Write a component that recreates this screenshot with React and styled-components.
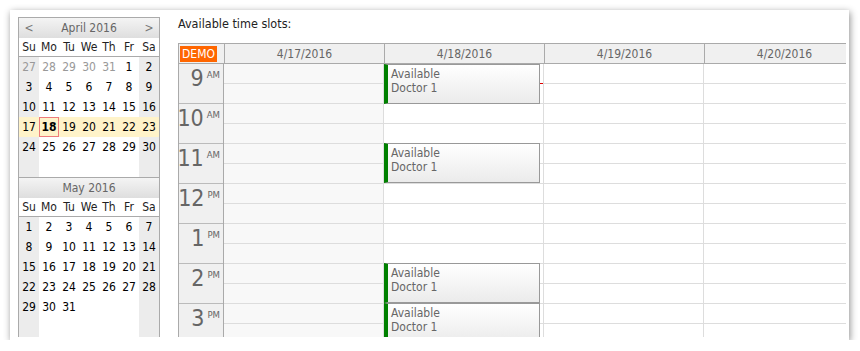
import React from "react";
import styled, { createGlobalStyle } from "styled-components";

const GlobalStyle = createGlobalStyle`
  body {
    margin: 0;
    background: #fff;
    font-family: "DejaVu Sans Condensed", "DejaVu Sans", sans-serif;
    font-size: 12px;
  }
`;

const Card = styled.div`
  margin: 10px 0 0 10px;
  width: 839px;
  height: 330px;
  box-sizing: border-box;
  background: #fff;
  box-shadow: 1px 2px 7px rgba(0, 0, 0, 0.45);
  padding: 7px 0 0 8px;
`;

const Body = styled.div`
  display: flex;
  align-items: flex-start;
  gap: 18px;
  height: 320px;
  overflow: hidden;
`;

const Nav = styled.div`
  width: 142px;
  box-sizing: border-box;
  border: 1px solid #aaa;
  display: flex;
  flex-direction: column;
  flex-shrink: 0;
`;

const Month = styled.div`
  & + & {
    border-top: 1px solid #aaa;
  }
`;

const MonthHeader = styled.div`
  height: 20px;
  display: flex;
  align-items: center;
  justify-content: space-between;
  padding: 0 5px;
  background: linear-gradient(#f4f4f4, #dedede);
  color: #666;
`;

const Arrow = styled.span`
  width: 10px;
  text-align: center;
  color: #777;
`;

const DayNames = styled.div`
  display: grid;
  grid-template-columns: repeat(7, 20px);
  height: 18px;
  align-items: center;
  border-bottom: 1px solid #aaa;
  background: #fff;
`;

const DayName = styled.span`
  text-align: center;
  color: #222;
`;

const Days = styled.div`
  display: grid;
  grid-template-columns: repeat(7, 20px);
  grid-auto-rows: 20px;
`;

const Day = styled.div`
  box-sizing: border-box;
  display: flex;
  align-items: center;
  justify-content: center;
  color: ${({ $other }) => ($other ? "#999" : "#000")};
  font-weight: ${({ $today }) => ($today ? "bold" : "normal")};
  border: ${({ $today }) => ($today ? "1px solid #ee7c7c" : "none")};
  background: ${({ $selected, $weekend }) =>
    $selected ? "#fff3c9" : $weekend ? "#ececec" : "#fff"};
`;

const Main = styled.div`
  display: flex;
  flex-direction: column;
`;

const Title = styled.div`
  height: 14px;
  line-height: 14px;
  margin-bottom: 12px;
  color: #222;
  font-size: 12.5px;
`;

const Scheduler = styled.div`
  width: 668px;
  overflow: hidden;
  border-left: 1px solid #aaa;
  border-top: 1px solid #aaa;
  box-sizing: border-box;
`;

const HeaderRow = styled.div`
  display: flex;
  height: 19px;
  border-bottom: 1px solid #aaa;
  background: #f0f0f0;
`;

const Corner = styled.div`
  width: 44px;
  flex-shrink: 0;
  border-right: 1px solid #aaa;
  display: flex;
  align-items: center;
  padding-left: 1px;
`;

const Demo = styled.span`
  background: #ff6600;
  color: #fff;
  padding: 1px 2px;
  line-height: 14px;
`;

const ColHeader = styled.div`
  width: 159px;
  flex-shrink: 0;
  border-right: 1px solid #aaa;
  display: flex;
  align-items: center;
  justify-content: center;
  color: #666;
`;

const Grid = styled.div`
  display: flex;
`;

const RowHeaders = styled.div`
  width: 44px;
  flex-shrink: 0;
  border-right: 1px solid #aaa;
  background: #f0f0f0;
`;

const HourCell = styled.div`
  height: 39px;
  border-bottom: 1px solid #bbb;
  display: flex;
  justify-content: flex-end;
  align-items: flex-start;
  padding-right: 3px;
  color: #666;
`;

const HourNum = styled.span`
  font-size: 23px;
  line-height: 26px;
  margin-top: 1px;
`;

const Ampm = styled.span`
  font-size: 9.5px;
  margin: 5px 0 0 3px;
`;

const DayCol = styled.div`
  position: relative;
  width: 159px;
  flex-shrink: 0;
  border-right: 1px solid #ddd;
  background: ${({ $off }) => ($off ? "#f8f8f8" : "#fff")};
`;

const Slot = styled.div`
  height: 19px;
  border-bottom: 1px solid #ddd;
`;

const Event = styled.div`
  position: absolute;
  left: 0;
  width: 156px;
  height: 40px;
  top: ${({ $row }) => Math.max(0, $row * 40 - 1)}px;
  box-sizing: border-box;
  border: 1px solid #999;
  border-left: 4px solid #008000;
  background: linear-gradient(#fff, #ebebeb);
  color: #666;
  padding: 2px 0 0 3px;
  line-height: 14px;
  z-index: 1;
`;

const RedMark = styled.div`
  position: absolute;
  right: 0;
  top: 19px;
  width: 4px;
  height: 1px;
  background: #d00;
`;

const april = {
  name: "April 2016",
  arrows: true,
  days: [
    [27, 1], [28, 1], [29, 1], [30, 1], [31, 1], [1], [2],
    [3], [4], [5], [6], [7], [8], [9],
    [10], [11], [12], [13], [14], [15], [16],
    [17, 0, 1], [18, 0, 1, 1], [19, 0, 1], [20, 0, 1], [21, 0, 1], [22, 0, 1], [23, 0, 1],
    [24], [25], [26], [27], [28], [29], [30],
    [""], [""], [""], [""], [""], [""], [""],
  ],
};

const may = {
  name: "May 2016",
  days: [
    [1], [2], [3], [4], [5], [6], [7],
    [8], [9], [10], [11], [12], [13], [14],
    [15], [16], [17], [18], [19], [20], [21],
    [22], [23], [24], [25], [26], [27], [28],
    [29], [30], [31], [""], [""], [""], [""],
    [""], [""], [""], [""], [""], [""], [""],
  ],
};

const dayNames = ["Su", "Mo", "Tu", "We", "Th", "Fr", "Sa"];

const hours = [
  ["9", "AM"], ["10", "AM"], ["11", "AM"], ["12", "PM"],
  ["1", "PM"], ["2", "PM"], ["3", "PM"],
];

const columns = [
  { date: "4/17/2016", off: true, events: [] },
  { date: "4/18/2016", events: [0, 2, 5, 6], mark: true },
  { date: "4/19/2016", events: [] },
  { date: "4/20/2016", events: [] },
];

const MonthView = ({ month }) => (
  <Month>
    <MonthHeader>
      <Arrow>{month.arrows ? "<" : ""}</Arrow>
      <span>{month.name}</span>
      <Arrow>{month.arrows ? ">" : ""}</Arrow>
    </MonthHeader>
    <DayNames>
      {dayNames.map((d) => (
        <DayName key={d}>{d}</DayName>
      ))}
    </DayNames>
    <Days>
      {month.days.map(([n, other, selected, today], i) => (
        <Day
          key={i}
          $other={other}
          $selected={selected}
          $today={today}
          $weekend={i % 7 === 0 || i % 7 === 6}
        >
          {n}
        </Day>
      ))}
    </Days>
  </Month>
);

const App = () => {
  return (
    <>
      <GlobalStyle />
      <Card>
        <Body>
          <Nav>
            <MonthView month={april} />
            <MonthView month={may} />
          </Nav>
          <Main>
            <Title>Available time slots:</Title>
            <Scheduler>
              <HeaderRow>
                <Corner>
                  <Demo>DEMO</Demo>
                </Corner>
                {columns.map((c) => (
                  <ColHeader key={c.date}>{c.date}</ColHeader>
                ))}
              </HeaderRow>
              <Grid>
                <RowHeaders>
                  {hours.map(([h, p]) => (
                    <HourCell key={h}>
                      <HourNum>{h}</HourNum>
                      <Ampm>{p}</Ampm>
                    </HourCell>
                  ))}
                </RowHeaders>
                {columns.map((c) => (
                  <DayCol key={c.date} $off={c.off}>
                    {hours.map(([h]) => (
                      <React.Fragment key={h}>
                        <Slot />
                        <Slot />
                      </React.Fragment>
                    ))}
                    {c.mark && <RedMark />}
                    {c.events.map((r) => (
                      <Event key={r} $row={r}>
                        Available
                        <br />
                        Doctor 1
                      </Event>
                    ))}
                  </DayCol>
                ))}
              </Grid>
            </Scheduler>
          </Main>
        </Body>
      </Card>
    </>
  );
};

export default App;
